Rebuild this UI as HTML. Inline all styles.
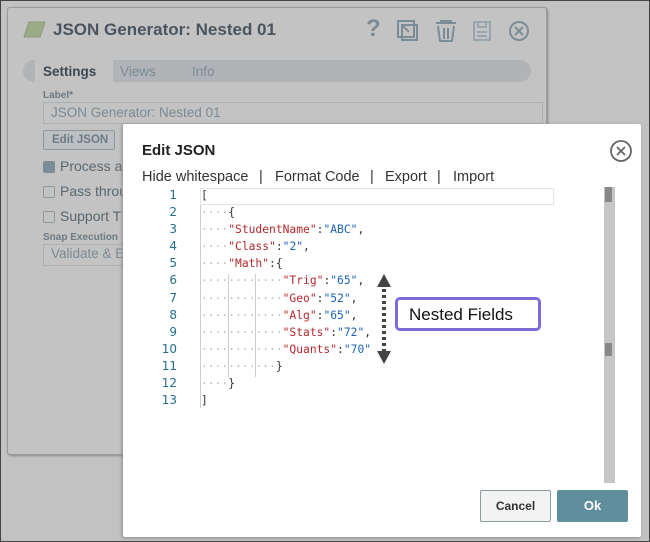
<!DOCTYPE html>
<html><head><style>
*{box-sizing:border-box;margin:0;padding:0}
body{width:650px;height:542px;overflow:hidden;background:#c2c2c2;font-family:"Liberation Sans","DejaVu Sans",sans-serif;position:relative;border:1px solid #444}
.panel{position:absolute;left:6px;top:6px;width:540px;height:448px;background:#c3c3c3;border:1px solid #9a9a9a;box-shadow:1px 1px 2px #888;border-radius:3px}
.t{position:absolute;white-space:nowrap}
.g{color:#7b8a93}
.modal{position:absolute;left:122px;top:123px;width:518px;height:413px;background:#fff;box-shadow:-1px 1px 3px #888;border-radius:2px}
.code{position:absolute;font-family:"DejaVu Sans Mono","Liberation Mono",monospace;font-size:11.3px;white-space:pre;line-height:17.1px}
.k{color:#b5282d}.s{color:#1a63b7}.d{color:#bbb}.p{color:#333}
.ln{color:#22708c;text-align:right;width:30px;font-family:"DejaVu Sans",sans-serif;font-size:12px}
.m{font-size:14.5px;color:#333;top:168px}
</style></head><body>
<div class="panel"></div>
<svg class="t" style="left:22px;top:20px" width="24" height="18"><polygon points="6,1 22,1 17,16 1,16" fill="#9bab88" stroke="#889878"/></svg>
<div class="t" style="left:52px;top:19px;font-size:17px;font-weight:bold;color:#4a5560">JSON Generator: Nested 01</div>
<div class="t" style="left:365px;top:14px;font-size:24px;font-weight:bold;color:#7c8c96">?</div>
<svg class="t" style="left:395px;top:19px" width="135" height="24" fill="none" stroke="#7c8c96" stroke-width="2">
<rect x="2" y="1" width="16" height="16"/><rect x="6" y="5" width="15" height="15"/><path d="M6 5 L13 12 M6 5 h6 M6 5 v6"/>
<path d="M40 3 h20 M45 3 v-2 h10 v2 M42 6 l2 15 h12 l2-15 M48 8 v11 M52 8 v11"/>
<rect x="78" y="2" width="16" height="18" stroke="#9aa6ad"/><path d="M81 12 h10 M81 16 h10 M82 2 v5 h8 v-5" stroke="#9aa6ad"/>
<circle cx="123" cy="11" r="9"/><path d="M119 7 l8 8 M127 7 l-8 8"/>
</svg>
<div class="t" style="left:22px;top:59px;width:508px;height:22px;background:#b0b4b6;border-radius:11px"></div>
<div class="t" style="left:34px;top:58px;width:78px;height:24px;background:#c3c3c3"></div>
<div class="t" style="left:42px;top:63px;font-size:13.5px;font-weight:bold;color:#3d4850">Settings</div>
<div class="t g" style="left:119px;top:63px;font-size:13.5px">Views</div>
<div class="t g" style="left:191px;top:63px;font-size:13.5px">Info</div>
<div class="t" style="left:42px;top:89px;font-size:10px;font-weight:bold;color:#6d7b83">Label*</div>
<div class="t" style="left:42px;top:101px;width:500px;height:22px;border:1px solid #a9b0b4"></div>
<div class="t g" style="left:50px;top:104px;font-size:13.5px">JSON Generator: Nested 01</div>
<div class="t" style="left:42px;top:129px;width:72px;height:20px;border:1px solid #8e979c;background:#bcc0c2;border-radius:2px;font-size:11.5px;font-weight:bold;color:#6d7b83;padding:3px 0 0 8px">Edit JSON</div>
<div class="t" style="left:42px;top:160px;width:12px;height:12px;background:#7c8c96;border-radius:2px"></div>
<div class="t" style="left:59px;top:157px;font-size:14px;color:#5a666e">Process a</div>
<div class="t" style="left:42px;top:185px;width:12px;height:12px;border:1px solid #8e979c;border-radius:2px"></div>
<div class="t" style="left:59px;top:182px;font-size:14px;color:#5a666e">Pass throu</div>
<div class="t" style="left:42px;top:210px;width:12px;height:12px;border:1px solid #8e979c;border-radius:2px"></div>
<div class="t" style="left:59px;top:207px;font-size:14px;color:#5a666e">Support T</div>
<div class="t" style="left:42px;top:231px;font-size:10px;font-weight:bold;color:#6d7b83">Snap Execution</div>
<div class="t" style="left:42px;top:243px;width:200px;height:22px;border:1px solid #a9b0b4"></div>
<div class="t g" style="left:50px;top:245px;font-size:13.5px">Validate &amp; E</div>

<div class="modal"></div>
<div class="t" style="left:141px;top:141px;font-size:15px;font-weight:bold;color:#222">Edit JSON</div>
<svg class="t" style="left:608px;top:138px" width="24" height="24" fill="none" stroke="#666" stroke-width="1.8"><circle cx="12" cy="12" r="10"/><path d="M8 8 l8 8 M16 8 l-8 8"/></svg>
<div class="t m" style="left:141px">Hide whitespace</div>
<div class="t m" style="left:258px">|</div>
<div class="t m" style="left:274px">Format Code</div>
<div class="t m" style="left:369px">|</div>
<div class="t m" style="left:384px">Export</div>
<div class="t m" style="left:436px">|</div>
<div class="t m" style="left:452px">Import</div>
<div class="t" style="left:199px;top:187px;width:1px;height:220px;background:#ccc"></div>
<div class="t" style="left:199px;top:187px;width:354px;height:17px;border:1px solid #e4e4e4"></div>
<div class="t" style="left:227px;top:273px;width:1px;height:103px;background:#ccc"></div>
<div class="t" style="left:254px;top:273px;width:1px;height:103px;background:#ccc"></div>
<div class="t" style="left:603px;top:186px;width:11px;height:296px;background:#c6c6c6"></div>
<div class="t" style="left:604px;top:342px;width:7px;height:13px;background:#888"></div>
<div class="t" style="left:604px;top:186px;width:7px;height:15px;background:#888"></div>
<div class="code ln" style="left:146px;top:186px">1
2
3
4
5
6
7
8
9
10
11
12
13</div>
<div class="code p" style="left:200px;top:186px">[
<span class="d">····</span>{
<span class="d">····</span><span class="k">"StudentName"</span>:<span class="s">"ABC"</span>,
<span class="d">····</span><span class="k">"Class"</span>:<span class="s">"2"</span>,
<span class="d">····</span><span class="k">"Math"</span>:{
<span class="d">············</span><span class="k">"Trig"</span>:<span class="s">"65"</span>,
<span class="d">············</span><span class="k">"Geo"</span>:<span class="s">"52"</span>,
<span class="d">············</span><span class="k">"Alg"</span>:<span class="s">"65"</span>,
<span class="d">············</span><span class="k">"Stats"</span>:<span class="s">"72"</span>,
<span class="d">············</span><span class="k">"Quants"</span>:<span class="s">"70"</span>
<span class="d">···········</span>}
<span class="d">····</span>}
]</div>
<svg class="t" style="left:375px;top:272px" width="16" height="94"><polygon points="8,1 15,14 1,14" fill="#444"/><line x1="8" y1="16" x2="8" y2="78" stroke="#444" stroke-width="4" stroke-dasharray="3,3"/><polygon points="8,91 15,78 1,78" fill="#444"/></svg>
<div class="t" style="left:394px;top:296px;width:146px;height:34px;border:3px solid #7b6cd6;border-radius:5px;background:#fff;font-size:17px;color:#111;padding:5px 0 0 11px">Nested Fields</div>
<div class="t" style="left:479px;top:489px;width:71px;height:32px;border:1px solid #8c9a9f;background:#f3f3f3;border-radius:2px;font-size:12px;font-weight:bold;color:#333;text-align:center;line-height:30px">Cancel</div>
<div class="t" style="left:556px;top:489px;width:71px;height:32px;background:#5f8e9c;border-radius:2px;font-size:13px;font-weight:bold;color:#fff;text-align:center;line-height:32px">Ok</div>
</body></html>
